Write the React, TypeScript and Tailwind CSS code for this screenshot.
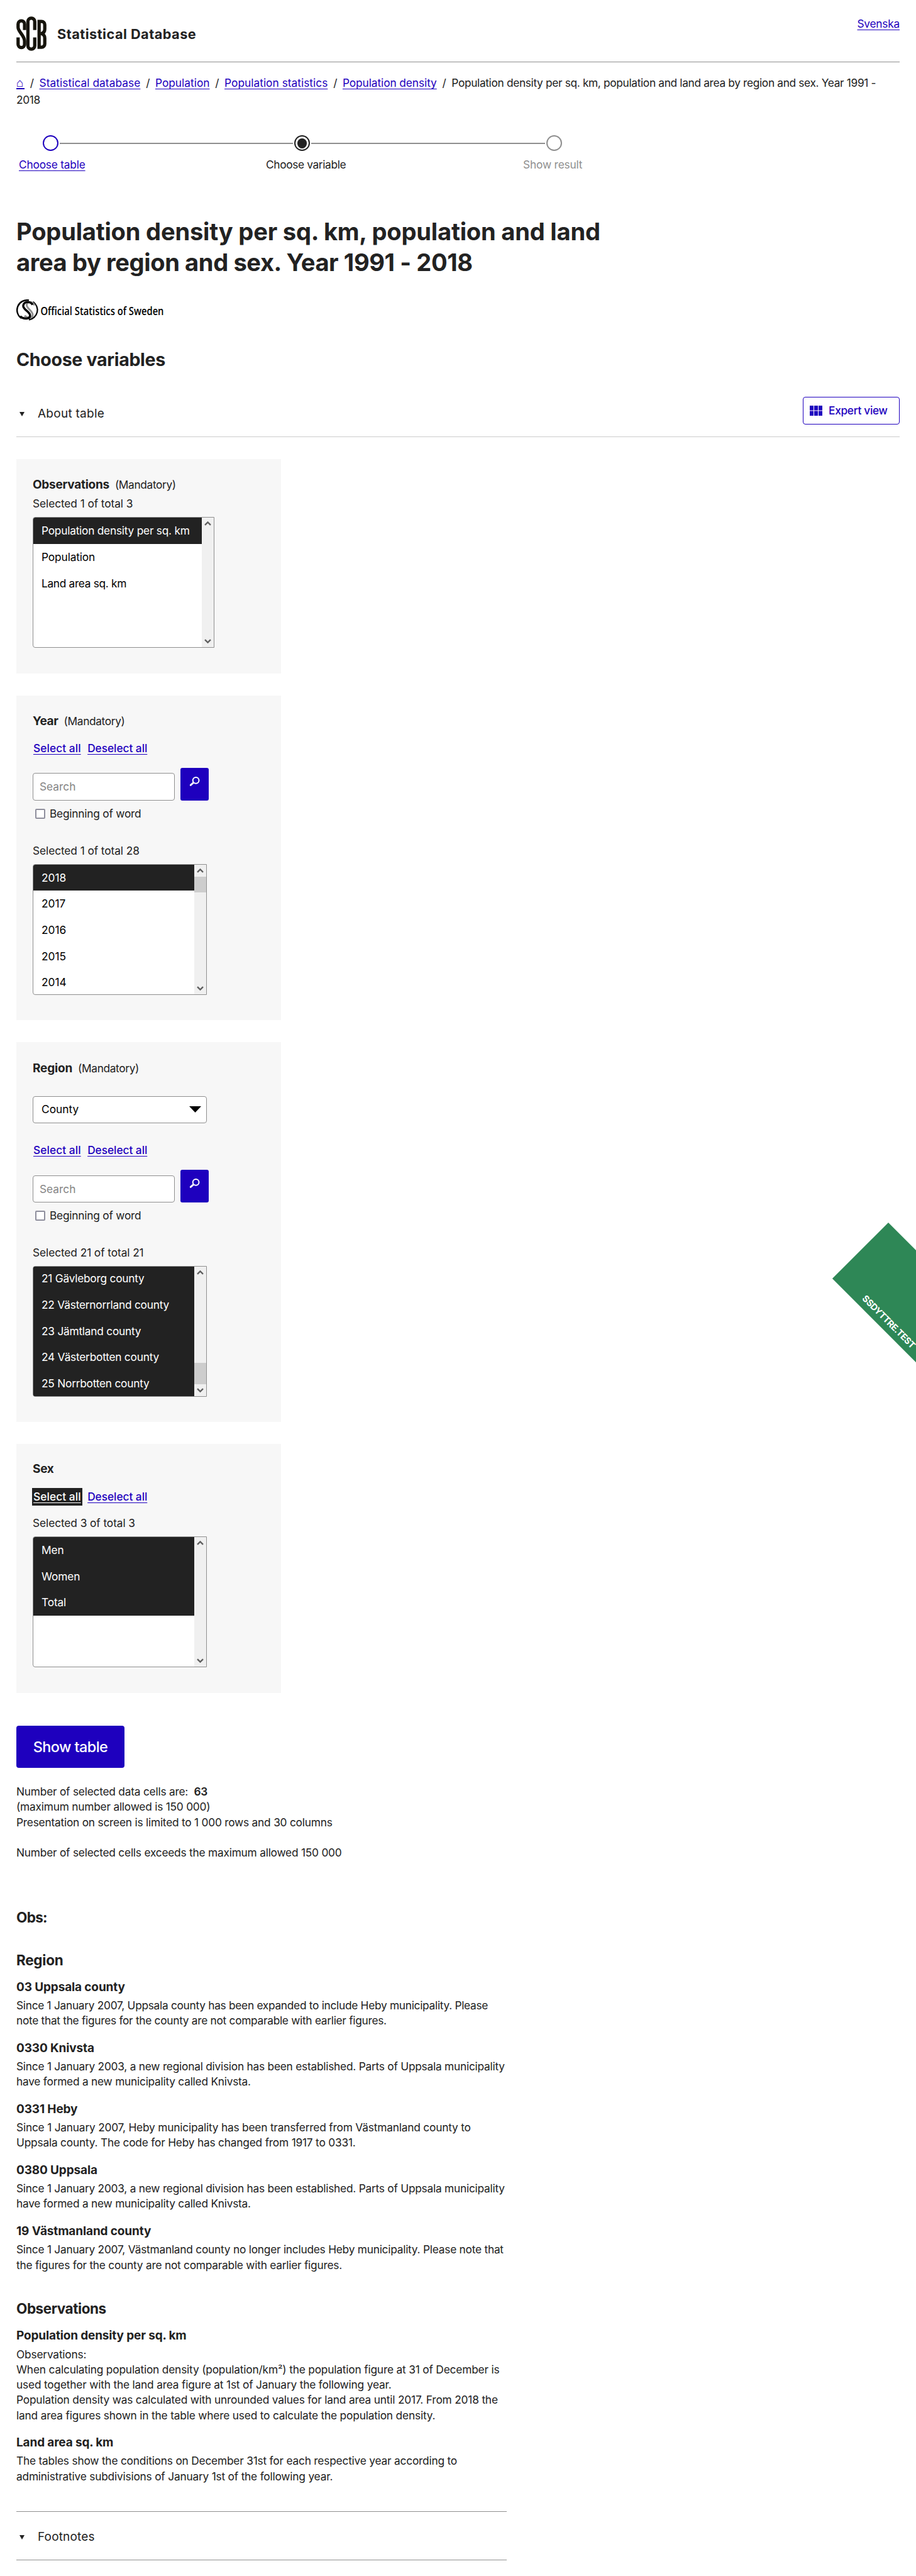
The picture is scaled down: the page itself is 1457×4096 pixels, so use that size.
import type { ReactNode } from "react";

const link =
  "text-[#1e00be] underline decoration-1 underline-offset-[3px] [text-decoration-skip-ink:none]";

function ScbLogo() {
  return (
    <svg className="h-[55px] w-[48px]" viewBox="0 0 55 63" preserveAspectRatio="none" fill="none" stroke="#16140c" strokeWidth="6">
      <path d="M15 25V14a5.9 5.9 0 0 0-11.8 0v6c0 8 11.8 15 11.8 25v6a5.9 5.9 0 0 1-11.8 0V38.500" />
      <path d="M33.500 25V9.500a6.200 6.200 0 0 0-12.400 0v44a6.200 6.200 0 0 0 12.400 0V38.500" />
      <path d="M41.500 9.300h4.500a5.800 5.800 0 0 1 5.800 5.800v8.400c0 4-2.500 7-6.500 8 4 1 6.500 4 6.500 8v11a5.800 5.800 0 0 1-5.800 5.800h-4.500z" />
    </svg>
  );
}

function OfficialStatisticsLogo() {
  return (
    <svg className="block h-[36px] w-[238px]" viewBox="0 0 238 36" role="img">
      <path d="M20 2.500A16 15.800 0 0 0 8 31" fill="none" stroke="#000" strokeWidth="2.400" />
      <path d="M26.500 4.800A16 15.800 0 0 1 20 33.500" fill="none" stroke="#000" strokeWidth="2.200" />
      <path d="M29 10.500C26 4.500 17.500 3 16.500 9.500c-.8 6 10.500 10 9.500 17-.6 4-7 5.500-13 .5" fill="none" stroke="#8f8f8f" strokeWidth="3" />
      <path d="M26 9.500C22 3.800 12.500 4 11 10.500c-1.300 7 11.500 10 10.800 16.500-.6 5.800-10 6-15.800 1" fill="none" stroke="#000" strokeWidth="3.400" />
      <text x="38.500" y="26" fontFamily="Open Sans" fontSize="18" fontWeight="600" textLength="196" lengthAdjust="spacingAndGlyphs">
        Official Statistics of Sweden
      </text>
    </svg>
  );
}

function Slash() {
  return <span className="mr-[8.500px] ml-[8.800px]">/</span>;
}

function Disclosure({ label, spacing }: { label: string; spacing: string }) {
  return (
    <div className="flex items-center">
      <svg className="ml-[5px] h-[7px] w-[8px]" viewBox="0 0 8 7">
        <path d="M0 0h8L4 7z" fill="#222" />
      </svg>
      <span className={"ml-[21px] text-[19px] leading-6 " + spacing}>{label}</span>
    </div>
  );
}

function Chevron({ flip = false }: { flip?: boolean }) {
  return (
    <svg className={flip ? "h-[19px] w-[19px] rotate-180" : "h-[19px] w-[19px]"} viewBox="0 0 19 19" fill="none">
      <path d="M5 11.800L9.500 7.400L14 11.800" stroke="#606060" strokeWidth="2.400" />
    </svg>
  );
}

type ListProps = {
  items: { text: string; spacing: string }[];
  selected: number;
  wide?: boolean;
  thumb?: "top" | "bottom";
};

function ListBox({ items, selected, wide, thumb }: ListProps) {
  return (
    <div
      className={
        "mt-[9px] flex h-[208px] overflow-hidden rounded-l-[4px] border border-[#8f8f8f] bg-white text-black " +
        (wide ? "w-[289px]" : "w-[277px]")
      }
    >
      <ul className={"grow " + (thumb === "bottom" ? "-mt-[1.500px] bg-[#222]" : "")}>
        {items.map((item, i) => (
          <li
            key={item.text}
            className={
              "h-[41.600px] pl-[13px] leading-[41.600px] whitespace-nowrap " +
              item.spacing +
              (i < selected ? " bg-[#222] text-white" : "")
            }
          >
            {item.text}
          </li>
        ))}
      </ul>
      <div className="flex w-[19px] flex-col bg-[#f0f0f0]">
        <Chevron />
        {thumb === "top" && <div className="h-[25px] bg-[#cdcdcd]" />}
        <div className="grow" />
        {thumb === "bottom" && <div className="h-[34px] bg-[#cdcdcd]" />}
        <Chevron flip />
      </div>
    </div>
  );
}

function Panel({ title, spacing, mandatory, tight, children }: { title: string; spacing: string; mandatory?: boolean; tight?: boolean; children: ReactNode }) {
  return (
    <section className={"w-[421px] bg-[#f7f7f7] pb-[40.500px] pl-[26px] " + (tight ? "pt-[28px]" : "pt-[29.600px]")}>
      <div className="flex h-6 items-baseline leading-6">
        <h3 className={"text-[19px] font-bold " + spacing}>{title}</h3>
        {mandatory && <span className="ml-[9px] tracking-[-0.021em]">(Mandatory)</span>}
      </div>
      {children}
    </section>
  );
}

function SelectLinks({ active = false }: { active?: boolean }) {
  return (
    <div className="flex h-6 gap-[10.500px] pl-px leading-6 font-medium">
      <a className={active ? "bg-[#222] tracking-[0.004em] text-white underline decoration-1 underline-offset-[3px] shadow-[0_0_0_2px_#222]" : link + " tracking-[0.004em]"}>
        Select all
      </a>
      <a className={link + " tracking-[-0.003em]"}>Deselect all</a>
    </div>
  );
}

function SearchBlock() {
  return (
    <>
      <div className="mt-[18.500px] flex items-end gap-[8.700px]">
        <div className="h-[43.300px] w-[226px] rounded-[4px] border border-[#8f8f8f] bg-white pl-[10px] leading-[42px] text-[#858585]">
          Search
        </div>
        <button className="flex h-[52px] w-[45px] rounded-[3px] bg-[#1e00be]">
          <svg className="h-[52px] w-[45px]" viewBox="0 0 45 52" fill="none" stroke="#fff">
            <circle cx="24.600" cy="19.800" r="4.900" strokeWidth="2" />
            <path d="M20.800 23.400L16.200 27.400" strokeWidth="2.800" strokeLinecap="round" />
          </svg>
        </button>
      </div>
      <div className="mt-[9px] flex h-6 items-center leading-6">
        <span className="ml-1 size-[16px] rounded-[2px] border-2 border-[#8f8f9d] bg-white" />
        <span className="ml-[7px] tracking-[-0.013em]">Beginning of word</span>
      </div>
    </>
  );
}

function Note({ title, spacing, className = "mt-[19.200px]", children }: { title: string; spacing: string; className?: string; children: ReactNode }) {
  return (
    <div className={className}>
      <h4 className={"text-[19px] leading-6 font-bold " + spacing}>{title}</h4>
      <p className="mt-[5.400px] leading-[24.250px] whitespace-nowrap">{children}</p>
    </div>
  );
}

export default function App() {
  return (
    <div className="relative h-[4096px] w-[1457px] overflow-hidden bg-white px-[26px] font-[Inter,sans-serif] text-[17.320px] text-[#222]">
      <header className="flex h-[99px] items-start border-b border-[#8f8f8f] pt-[26px]">
        <ScbLogo />
        <div className="mt-[15px] ml-[17px] text-[21.700px] leading-[26px] font-bold tracking-[0.022em]">Statistical Database</div>
        <a className={link + " ml-auto leading-6 tracking-[-0.014em]"}>Svenska</a>
      </header>

      <nav className="pt-[18.500px] leading-[27.700px] whitespace-nowrap">
        <a className="inline-block h-[24px] w-[13px] border-b-2 border-[#1e00be] text-[19px] leading-[27px] text-[#1e00be]">⌂</a>
        <Slash />
        <a className={link + " tracking-[0.003em]"}>Statistical database</a>
        <Slash />
        <a className={link}>Population</a>
        <Slash />
        <a className={link + " tracking-[0.001em]"}>Population statistics</a>
        <Slash />
        <a className={link + " tracking-[-0.005em]"}>Population density</a>
        <Slash />
        <span className="tracking-[-0.020em]">
          Population density per sq. km, population and land area by region and sex. Year 1991 -
          <br />
          2018
        </span>
      </nav>

      <div className="mt-[42.500px] ml-[41.500px] flex w-[826px] items-center">
        <span className="size-[25px] rounded-full border-2 border-[#1e00be]" />
        <span className="mx-[2px] h-[2px] grow bg-[#8f8f8f]" />
        <span className="flex size-[25px] items-center justify-center rounded-full border-2 border-[#222]">
          <span className="size-[15.500px] rounded-full bg-[#222]" />
        </span>
        <span className="mx-[2px] h-[2px] grow bg-[#8f8f8f]" />
        <span className="size-[25px] rounded-full border-2 border-[#8f8f8f]" />
      </div>
      <div className="mt-[10px] ml-[4px] flex leading-6 whitespace-nowrap">
        <span className="w-[393px]">
          <a className={link + " tracking-[-0.012em]"}>Choose table</a>
        </span>
        <span className="w-[409px] tracking-[-0.021em]">Choose variable</span>
        <span className="tracking-[-0.010em] text-[#8f8f8f]">Show result</span>
      </div>

      <h1 className="mt-[69.600px] text-[38.100px] leading-[49.200px] font-bold whitespace-nowrap">
        <span className="tracking-[-0.005em]">Population density per sq. km, population and land</span>
        <br />
        <span className="tracking-[-0.010em]">area by region and sex. Year 1991 - 2018</span>
      </h1>
      <div className="mt-[33px]">
        <OfficialStatisticsLogo />
      </div>
      <h2 className="mt-[42.500px] text-[28.600px] leading-[36px] font-bold tracking-[-0.012em]">Choose variables</h2>

      <div className="mt-[40.800px] flex h-[64.500px] items-start justify-between border-b border-[#ccc]">
        <div className="mt-[15.500px]">
          <Disclosure label="About table" spacing="tracking-[0.014em]" />
        </div>
        <button className="flex h-[44px] w-[154px] items-center rounded-[4px] border border-[#1e00be] pl-[10px] font-medium text-[#1e00be]">
          <svg className="h-[16px] w-[20px]" viewBox="0 0 20 16" fill="#1e00be">
            <path d="M0 0h6v7.500H0zM7 0h6v7.500H7zM14 0h6v7.500h-6zM0 8.500h6V16H0zM7 8.500h6V16H7zM14 8.500h6V16h-6z" />
          </svg>
          <span className="ml-[10px] tracking-[-0.018em] whitespace-nowrap">Expert view</span>
        </button>
      </div>

      <div className="mt-[34.700px] flex flex-col gap-[34.700px]">
        <Panel title="Observations" spacing="tracking-[-0.014em]" mandatory>
          <div className="mt-[6px] leading-6 tracking-[-0.005em]">Selected 1 of total 3</div>
          <ListBox
            wide
            selected={1}
            items={[
              { text: "Population density per sq. km", spacing: "tracking-[-0.014em]" },
              { text: "Population", spacing: "tracking-[-0.008em]" },
              { text: "Land area sq. km", spacing: "tracking-[-0.019em]" },
            ]}
          />
        </Panel>

        <Panel title="Year" spacing="tracking-[-0.020em]" mandatory>
          <div className="mt-[19px]">
            <SelectLinks />
          </div>
          <SearchBlock />
          <div className="mt-[35px] leading-6 tracking-[-0.005em]">Selected 1 of total 28</div>
          <ListBox
            selected={1}
            thumb="top"
            items={["2018", "2017", "2016", "2015", "2014"].map((text) => ({ text, spacing: "tracking-[0em]" }))}
          />
        </Panel>

        <Panel title="Region" spacing="tracking-[-0.010em]" mandatory>
          <div className="mt-[32px] flex h-[43.300px] w-[277px] items-center justify-between rounded-[4px] border border-[#8f8f8f] bg-white pr-[8px] pl-[13px] text-black">
            County
            <svg className="h-[10px] w-[19px]" viewBox="0 0 19 10">
              <path d="M0 0h19L9.500 10z" />
            </svg>
          </div>
          <div className="mt-[31.500px]">
            <SelectLinks />
          </div>
          <SearchBlock />
          <div className="mt-[35px] leading-6 tracking-[-0.005em]">Selected 21 of total 21</div>
          <ListBox
            selected={5}
            thumb="bottom"
            items={[
              "21 Gävleborg county",
              "22 Västernorrland county",
              "23 Jämtland county",
              "24 Västerbotten county",
              "25 Norrbotten county",
            ].map((text) => ({ text, spacing: "tracking-[-0.014em]" }))}
          />
        </Panel>

        <Panel title="Sex" spacing="tracking-[-0.014em]" tight>
          <div className="mt-[20.200px]">
            <SelectLinks active />
          </div>
          <div className="mt-[18px] leading-6 tracking-[-0.005em]">Selected 3 of total 3</div>
          <ListBox selected={3} items={["Men", "Women", "Total"].map((text) => ({ text, spacing: "tracking-[-0.008em]" }))} />
        </Panel>
      </div>

      <button className="mt-[52px] flex h-[67.600px] w-[172px] items-center justify-center rounded-[4px] bg-[#1e00be] text-[23.400px] font-medium tracking-[-0.023em] text-white">
        Show table
      </button>

      <div className="mt-[25.700px] leading-[24.250px] tracking-[-0.013em] whitespace-pre">
        <p>
          Number of selected data cells are:{"  "}
          <span className="font-semibold">63</span>
        </p>
        <p>(maximum number allowed is 150 000)</p>
        <p>Presentation on screen is limited to 1 000 rows and 30 columns</p>
        <p className="mt-[24.250px]">Number of selected cells exceeds the maximum allowed 150 000</p>
      </div>

      <h3 className="mt-[76.500px] text-[22.500px] leading-7 font-bold tracking-[-0.030em]">Obs:</h3>
      <h3 className="mt-[39.800px] text-[22.500px] leading-7 font-bold tracking-[-0.012em]">Region</h3>
      <Note title="03 Uppsala county" spacing="tracking-[-0.007em]" className="mt-[17px]">
        <span className="tracking-[-0.017em]">
          Since 1 January 2007, Uppsala county has been expanded to include Heby municipality. Please
          <br />
          note that the figures for the county are not comparable with earlier figures.
        </span>
      </Note>
      <Note title="0330 Knivsta" spacing="tracking-[-0.007em]">
        <span className="tracking-[-0.014em]">
          Since 1 January 2003, a new regional division has been established. Parts of Uppsala municipality
          <br />
          have formed a new municipality called Knivsta.
        </span>
      </Note>
      <Note title="0331 Heby" spacing="tracking-[-0.007em]">
        <span className="tracking-[-0.012em]">
          Since 1 January 2007, Heby municipality has been transferred from Västmanland county to
          <br />
          Uppsala county. The code for Heby has changed from 1917 to 0331.
        </span>
      </Note>
      <Note title="0380 Uppsala" spacing="tracking-[-0.007em]">
        <span className="tracking-[-0.014em]">
          Since 1 January 2003, a new regional division has been established. Parts of Uppsala municipality
          <br />
          have formed a new municipality called Knivsta.
        </span>
      </Note>
      <Note title="19 Västmanland county" spacing="tracking-[-0.007em]">
        <span className="tracking-[-0.014em]">
          Since 1 January 2007, Västmanland county no longer includes Heby municipality. Please note that
          <br />
          the figures for the county are not comparable with earlier figures.
        </span>
      </Note>

      <h3 className="mt-[43.500px] text-[22.500px] leading-7 font-bold tracking-[-0.020em]">Observations</h3>
      <Note title="Population density per sq. km" spacing="tracking-[-0.008em]" className="mt-[17px]">
        <span className="tracking-[-0.011em]">
          Observations:
          <br />
          When calculating population density (population/km²) the population figure at 31 of December is
          <br />
          used together with the land area figure at 1st of January the following year.
          <br />
          Population density was calculated with unrounded values for land area until 2017. From 2018 the
          <br />
          land area figures shown in the table where used to calculate the population density.
        </span>
      </Note>
      <Note title="Land area sq. km" spacing="tracking-[-0.008em]">
        <span className="tracking-[-0.012em]">
          The tables show the conditions on December 31st for each respective year according to
          <br />
          administrative subdivisions of January 1st of the following year.
        </span>
      </Note>

      <div className="mt-[43.500px] flex h-[78px] w-[780px] items-center border-y border-[#8f8f8f] pt-[4px]">
        <Disclosure label="Footnotes" spacing="tracking-[0.008em]" />
      </div>

      <div className="absolute top-[1943.800px] left-[1413px] flex h-[125.500px] w-[220px] origin-top-left rotate-45 items-end bg-[#2e8756] pb-[5.500px] pl-[56px] text-[14.300px] leading-[18px] font-bold tracking-[-0.030em] text-white">
        SSDYTTRE.TEST
      </div>
    </div>
  );
}
